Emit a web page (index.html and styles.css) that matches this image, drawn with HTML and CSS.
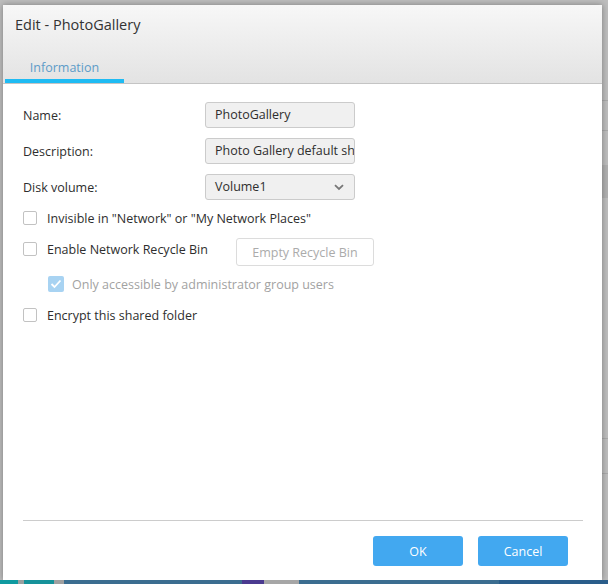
FILE: index.html
```html
<!DOCTYPE html>
<html>
<head>
<meta charset="utf-8">
<link rel="stylesheet" href="styles.css">
</head>
<body>
<div class="desk">
  <div class="edge-right">
    <span class="rl rl1"></span><span class="rl rl2"></span><span class="rblock"></span><span class="rl rl3"></span><span class="rl rl4"></span>
  </div>
  <div class="dialog">
    <div class="header">
      <div class="title">Edit - PhotoGallery</div>
      <div class="tabs">
        <div class="tab active">Information</div>
      </div>
    </div>
    <div class="body">
      <div class="form">
        <div class="row">
          <label class="lbl">Name:</label>
          <div class="field">PhotoGallery</div>
        </div>
        <div class="row">
          <label class="lbl">Description:</label>
          <div class="field">Photo Gallery default sh</div>
        </div>
        <div class="row">
          <label class="lbl">Disk volume:</label>
          <div class="field select">Volume1
            <svg class="chev" width="10" height="7" viewBox="0 0 10 7"><path d="M1 1.2 L5 5 L9 1.2" fill="none" stroke="#777" stroke-width="1.8"/></svg>
          </div>
        </div>
      </div>
      <div class="checks">
        <div class="chk"><span class="box"></span><span>Invisible in "Network" or "My Network Places"</span></div>
        <div class="chk recycle"><span class="box"></span><span>Enable Network Recycle Bin</span><button class="ghost">Empty Recycle Bin</button></div>
        <div class="chk sub disabled"><span class="box checked"><svg width="12" height="10" viewBox="0 0 12 10"><path d="M1.5 5 L4.5 8 L10.5 1.5" fill="none" stroke="#fff" stroke-width="1.8"/></svg></span><span>Only accessible by administrator group users</span></div>
        <div class="chk"><span class="box"></span><span>Encrypt this shared folder</span></div>
      </div>
    </div>
    <div class="footer">
      <button class="btn">OK</button>
      <button class="btn">Cancel</button>
    </div>
  </div>
  <div class="taskbar">
    <span class="tb t1"></span><span class="tb t2"></span><span class="tb t3"></span><span class="tb t4"></span><span class="tb t5"></span><span class="tb t6"></span><span class="tb t7"></span><span class="tb t8"></span><span class="tb t9"></span>
  </div>
</div>
</body>
</html>
```
FILE: styles.css
```css
html, body {
  margin: 0;
  padding: 0;
}
body {
  background: #bdbdbd;
  font-family: "Open Sans", "Noto Sans", sans-serif;
  font-size: 12.5px;
  color: #2e2e2e;
}
.desk {
  position: relative;
  width: 608px;
  height: 584px;
  overflow: hidden;
  background: #bdbdbd;
}
.edge-right {
  position: absolute;
  right: 0;
  top: 0;
  width: 6px;
  height: 580px;
}
.rl { position: absolute; left: 0; right: 0; height: 1px; background: #a9a9a9; }
.rl1 { top: 100px; }
.rl2 { top: 130px; }
.rl3 { top: 438px; }
.rl4 { top: 473px; }
.rblock { position: absolute; left: 0; right: 0; top: 165px; height: 33px; background: #b0b0b0; }
.dialog {
  position: absolute;
  left: 3px;
  top: 5px;
  width: 599px;
  height: 575px;
  background: #fff;
  box-shadow: 0 0 6px rgba(0,0,0,0.35);
  display: flex;
  flex-direction: column;
}
.header {
  height: 78px;
  background: linear-gradient(#f7f7f7, #e3e3e3);
  border-bottom: 1px solid #c4c4c4;
  display: flex;
  flex-direction: column;
  justify-content: space-between;
}
.title {
  padding: 9px 0 0 12px;
  font-size: 14.5px;
  color: #333;
  line-height: 22px;
}
.tabs {
  display: flex;
  padding-left: 2px;
}
.tab {
  width: 119px;
  height: 24px;
  text-align: center;
  color: #5d9cc8;
  font-size: 12.5px;
  line-height: 18px;
  box-sizing: border-box;
}
.tab.active {
  border-bottom: 4px solid #1fbbf3;
}
.body {
  flex: 1;
  padding: 18px 20px 0 20px;
}
.form {
  display: flex;
  flex-direction: column;
  gap: 10px;
}
.row {
  display: flex;
  align-items: center;
  height: 26px;
}
.lbl {
  width: 182px;
}
.field {
  width: 150px;
  height: 26px;
  box-sizing: border-box;
  border: 1px solid #cbcbcb;
  border-radius: 3px;
  background: #f0f0f0;
  padding-left: 9px;
  line-height: 24px;
  white-space: nowrap;
  overflow: hidden;
  display: flex;
  align-items: center;
}
.select {
  justify-content: space-between;
  padding-right: 10px;
}
.chev { display: block; }
.checks {
  margin-top: 11px;
  display: flex;
  flex-direction: column;
}
.chk {
  display: flex;
  align-items: center;
  height: 14px;
  margin-bottom: 17px;
  gap: 10px;
}
.chk.recycle { margin-top: 0; margin-bottom: 21px; }
.box {
  width: 14px;
  height: 14px;
  box-sizing: border-box;
  border: 1px solid #c2c2c2;
  border-radius: 2px;
  background: #fff;
  flex: none;
  display: flex;
  align-items: center;
  justify-content: center;
}
.box.checked {
  width: 16px;
  height: 16px;
  border: none;
  background: #a8d3f2;
  border-radius: 2px;
}
.chk.sub { padding-left: 25px; gap: 8px; }
.chk.disabled { color: #a2a2a2; }
.ghost {
  margin-left: 18px;
  width: 138px;
  height: 28px;
  border: 1px solid #dcdcdc;
  border-radius: 3px;
  background: #fff;
  color: #ababab;
  font-family: inherit;
  font-size: 12.5px;
  margin-top: 6px;
}
.footer {
  margin: 0 19px 14px 20px;
  border-top: 1px solid #cccccc;
  padding-top: 15px;
  display: flex;
  justify-content: flex-end;
  gap: 15px;
  padding-right: 15px;
}
.btn {
  width: 90px;
  height: 30px;
  border: none;
  border-radius: 3px;
  background: #42a8f0;
  color: #fff;
  font-family: inherit;
  font-size: 12.5px;
}
.taskbar {
  position: absolute;
  left: 0;
  right: 0;
  bottom: 0;
  height: 4px;
  display: flex;
}
.tb { height: 4px; }
.t1 { width: 18px; background: #0f9aa0; }
.t2 { width: 6px; background: #9aa0a0; }
.t3 { width: 30px; background: #16929a; }
.t4 { width: 10px; background: #a0a0a0; }
.t5 { width: 178px; background: #3b6d90; }
.t6 { width: 22px; background: #4b3a90; }
.t7 { width: 35px; background: #a6a6a6; }
.t8 { width: 200px; background: #3b6d90; }
.t9 { flex: 1; background: #2a5d8a; }
```
